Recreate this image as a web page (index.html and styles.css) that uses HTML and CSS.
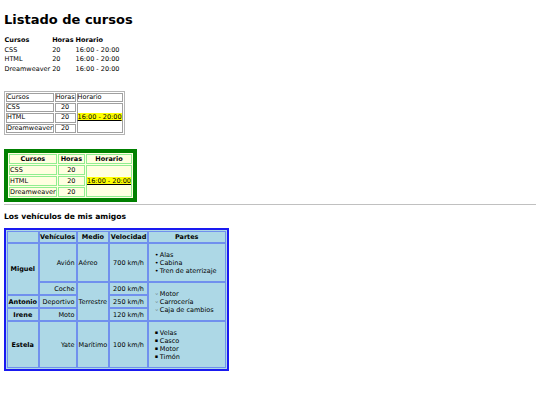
FILE: index.html
```html
<!DOCTYPE html>
<html lang="es">
<head>
<meta charset="utf-8">
<title>Listado de cursos</title>
<link rel="stylesheet" href="styles.css">
</head>
<body>
<h1>Listado de cursos</h1>

<table class="plain">
  <tr><th>Cursos</th><th>Horas</th><th>Horario</th></tr>
  <tr><td>CSS</td><td>20</td><td>16:00 - 20:00</td></tr>
  <tr><td>HTML</td><td>20</td><td>16:00 - 20:00</td></tr>
  <tr><td>Dreamweaver</td><td>20</td><td>16:00 - 20:00</td></tr>
</table>

<table class="gray">
  <tr><td>Cursos</td><td>Horas</td><td>Horario</td></tr>
  <tr><td>CSS</td><td class="num">20</td><td rowspan="3"><span class="hl">16:00 - 20:00</span></td></tr>
  <tr><td>HTML</td><td class="num">20</td></tr>
  <tr><td>Dreamweaver</td><td class="num">20</td></tr>
</table>

<table class="green">
  <tr><th>Cursos</th><th>Horas</th><th>Horario</th></tr>
  <tr><td>CSS</td><td class="num">20</td><td rowspan="3"><span class="hl">16:00 - 20:00</span></td></tr>
  <tr><td>HTML</td><td class="num">20</td></tr>
  <tr><td>Dreamweaver</td><td class="num">20</td></tr>
</table>

<hr class="sep">

<h3>Los vehículos de mis amigos</h3>

<table class="cars">
  <tr><th></th><th>Vehículos</th><th>Medio</th><th>Velocidad</th><th>Partes</th></tr>
  <tr>
    <th rowspan="2">Miguel</th>
    <td class="veh">Avión</td>
    <td>Aéreo</td>
    <td class="vel">700 km/h</td>
    <td><ul class="disc"><li>Alas</li><li>Cabina</li><li>Tren de aterrizaje</li></ul></td>
  </tr>
  <tr>
    <td class="veh">Coche</td>
    <td rowspan="3">Terrestre</td>
    <td class="vel">200 km/h</td>
    <td rowspan="3"><ul class="circle"><li>Motor</li><li>Carrocería</li><li>Caja de cambios</li></ul></td>
  </tr>
  <tr>
    <th>Antonio</th>
    <td class="veh">Deportivo</td>
    <td class="vel">250 km/h</td>
  </tr>
  <tr>
    <th>Irene</th>
    <td class="veh">Moto</td>
    <td class="vel">120 km/h</td>
  </tr>
  <tr>
    <th>Estela</th>
    <td class="veh">Yate</td>
    <td>Marítimo</td>
    <td class="vel">100 km/h</td>
    <td><ul class="square"><li>Velas</li><li>Casco</li><li>Motor</li><li>Timón</li></ul></td>
  </tr>
</table>
</body>
</html>
```

FILE: styles.css
```css
html, body {
  background: #fff;
}
body {
  margin: 4px;
  font-family: "DejaVu Sans", Verdana, sans-serif;
  font-size: 6.5px;
  color: #000;
}
h1 {
  font-size: 13px;
  font-weight: bold;
  margin: 8px 0 8.7px;
}
h3 {
  font-size: 7.6px;
  font-weight: bold;
  margin: 7.6px 0 6.6px;
}
table {
  font-size: 6.5px;
}
.plain {
  border-spacing: 1px;
  margin-left: -1px;
}
.plain th,
.plain td {
  padding: 0.5px;
  line-height: 7.6px;
  text-align: left;
}
.gray {
  margin-top: 16px;
  border: 1px solid #b4b4b4;
  border-spacing: 1px;
}
.gray td {
  border: 1px solid #a0a0a0;
  padding: 0;
  line-height: 7.2px;
}
.num {
  text-align: center;
}
.hl {
  background: #ffff00;
  text-decoration: underline;
}
.green {
  margin-top: 14px;
  border: 4px solid #008000;
  background: #ffffe0;
  border-spacing: 1px;
}
.green th,
.green td {
  border: 1px solid #90ee90;
  padding: 0;
}
.green th {
  padding: 0 2px;
}
.sep {
  margin: 2px 0 0;
  border: 0;
  border-top: 1px solid #c0c0c0;
  height: 0;
}
.cars {
  border: 2px solid #1a1af0;
  background: #add8e6;
  border-spacing: 0;
  padding: 1px;
}
.cars th,
.cars td {
  border: 1px solid #7090ee;
  padding: 1px;
}
.cars th {
  padding: 1px 0.5px;
}
.cars .veh {
  text-align: right;
}
.cars .vel {
  text-align: center;
  padding: 1px 2px;
}
.cars ul {
  margin: 5.5px 0;
  padding: 0 7px 0 5px;
  list-style: none;
}
.cars li::before {
  display: inline-block;
  width: 5px;
  vertical-align: top;
}
.disc li::before { content: "\2022"; }
.circle li::before { content: "\25E6"; }
.square li::before {
  content: "\25AA";
  font-size: 5px;
  line-height: 7.6px;
}
```
